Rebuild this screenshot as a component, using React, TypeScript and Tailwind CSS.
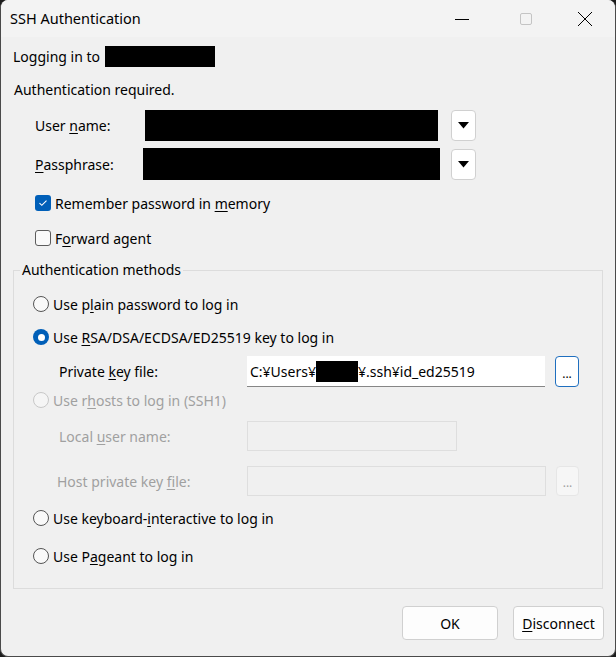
import React from "react";

const font = { fontFamily: '"Noto Sans", "Open Sans", sans-serif' };

function Key({ children }: { children: React.ReactNode }) {
  return <span className="underline underline-offset-2 decoration-1">{children}</span>;
}

function DropButton() {
  return (
    <div className="ml-[13px] flex h-[31px] w-[25px] items-center justify-center rounded-[4px] border border-[#d0d0d0] bg-white">
      <svg width="11" height="7" viewBox="0 0 11 7">
        <path d="M0 0 H11 L5.5 6.5 Z" fill="#000" />
      </svg>
    </div>
  );
}

function Checkbox({ checked }: { checked?: boolean }) {
  return checked ? (
    <div className="flex h-[16px] w-[16px] items-center justify-center rounded-[3px] bg-[#005fb8]">
      <svg width="10" height="8" viewBox="0 0 10 8">
        <path d="M1.5 4.2 L3.8 6.3 L8.5 1.6" fill="none" stroke="#fff" strokeWidth="1.1" />
      </svg>
    </div>
  ) : (
    <div className="h-[16px] w-[16px] rounded-[3px] border border-[#5c5c5c] bg-[#f9f9f9]" />
  );
}

function Radio({ checked, disabled }: { checked?: boolean; disabled?: boolean }) {
  if (checked)
    return (
      <div className="flex h-[16px] w-[16px] items-center justify-center rounded-full bg-[#005fb8]">
        <div className="h-[7px] w-[7px] rounded-full bg-white" />
      </div>
    );
  return (
    <div
      className={
        "h-[16px] w-[16px] rounded-full border " +
        (disabled ? "border-[#c8c8c8] bg-[#f5f5f5]" : "border-[#555] bg-[#f9f9f9]")
      }
    />
  );
}

function RadioRow({
  children,
  checked,
  disabled,
  mt,
}: {
  children: React.ReactNode;
  checked?: boolean;
  disabled?: boolean;
  mt: string;
}) {
  return (
    <div className={"flex h-[20px] items-center pl-[19px] " + mt}>
      <Radio checked={checked} disabled={disabled} />
      <span className={"ml-[4px] " + (disabled ? "text-[#a0a0a0]" : "")}>{children}</span>
    </div>
  );
}

export default function App() {
  return (
    <div className="h-[657px] w-[616px] bg-[#1c1c1c]" style={font}>
      <div className="flex h-full w-full flex-col overflow-hidden rounded-[8px] border-x border-b border-[#4a4a4a] bg-[#f0f0f0] text-[14px] text-black">
        {/* title bar */}
        <div className="flex h-[37px] shrink-0 items-center bg-[#f3f3f3] pl-[9px]">
          <span className="text-[14.5px]">SSH Authentication</span>
          <div className="ml-auto flex items-center">
            <svg width="16" height="16" viewBox="0 0 16 16" className="mr-[49px]">
              <path d="M1 8.5 H15" stroke="#000" strokeWidth="1" />
            </svg>
            <svg width="14" height="14" viewBox="0 0 14 14" className="mr-[44px]">
              <rect x="1.5" y="1.5" width="11" height="11" rx="1.5" fill="none" stroke="#c4c4c4" />
            </svg>
            <svg width="16" height="16" viewBox="0 0 16 16" className="mr-[22px]">
              <path d="M1 1 L15 15 M15 1 L1 15" stroke="#000" strokeWidth="1" />
            </svg>
          </div>
        </div>

        {/* logging in */}
        <div className="mt-[9px] flex h-[21px] items-center pl-[12px]">
          <span>Logging in to</span>
          <div className="ml-[5px] h-[21px] w-[110px] bg-black" />
        </div>
        <div className="mt-[12px] flex h-[20px] items-center pl-[13px]">Authentication required.</div>

        {/* user name */}
        <div className="mt-[10px] flex h-[32px] items-center pl-[34px]">
          <span className="w-[110px]">
            User <Key>n</Key>ame:
          </span>
          <div className="h-[31px] w-[293px] bg-black" />
          <DropButton />
        </div>
        <div className="mt-[7px] flex h-[32px] items-center pl-[34px]">
          <span className="w-[108px]">
            <Key>P</Key>assphrase:
          </span>
          <div className="h-[32px] w-[297px] bg-black" />
          <div className="-ml-[2px]">
            <DropButton />
          </div>
        </div>

        {/* checkboxes */}
        <div className="mt-[13px] flex h-[20px] items-center pl-[34px]">
          <Checkbox checked />
          <span className="ml-[4px]">
            Remember password in <Key>m</Key>emory
          </span>
        </div>
        <div className="mt-[15px] flex h-[20px] items-center pl-[34px]">
          <Checkbox />
          <span className="ml-[4px]">
            F<Key>o</Key>rward agent
          </span>
        </div>

        {/* group */}
        <div className="relative mx-[12px] mt-[22px] h-[319px] border border-[#dcdcdc]">
          <span className="absolute -top-[11px] left-[6px] bg-[#f0f0f0] px-[2px] leading-[20px]">
            Authentication methods
          </span>
          <RadioRow mt="mt-[23px]">
            Use p<Key>l</Key>ain password to log in
          </RadioRow>
          <RadioRow mt="mt-[13px]" checked>
            Use <Key>R</Key>SA/DSA/ECDSA/ED25519 key to log in
          </RadioRow>
          <div className="mt-[9px] flex h-[31px] items-center pl-[45px]">
            <span className="w-[188px]">
              Private <Key>k</Key>ey file:
            </span>
            <div className="flex h-[31px] w-[298px] items-center border-b border-[#868686] bg-white pl-[3px]">
              C:¥Users¥<span className="inline-block h-[21px] w-[42px] bg-black" />¥.ssh¥id_ed25519
            </div>
            <div className="ml-[10px] flex h-[31px] w-[24px] items-center justify-center rounded-[4px] border border-[#1f6fbf] bg-white pt-[4px] text-[12px] leading-none">
              ...
            </div>
          </div>
          <RadioRow mt="mt-[3px]" disabled>
            Use r<Key>h</Key>osts to log in (SSH1)
          </RadioRow>
          <div className="mt-[11px] flex h-[30px] items-center pl-[45px] text-[#a0a0a0]">
            <span className="w-[188px]">
              Local <Key>u</Key>ser name:
            </span>
            <div className="h-[30px] w-[210px] border border-[#dedede] bg-[#f0f0f0]" />
          </div>
          <div className="mt-[15px] flex h-[30px] items-center pl-[43px] text-[#a0a0a0]">
            <span className="w-[190px]">
              Host private key <Key>f</Key>ile:
            </span>
            <div className="h-[30px] w-[299px] border border-[#dedede] bg-[#f0f0f0]" />
            <div className="ml-[10px] flex h-[30px] w-[23px] items-center justify-center rounded-[4px] border border-[#e6e6e6] bg-[#f6f6f6] pt-[4px] text-[12px] leading-none text-[#a0a0a0]">
              ...
            </div>
          </div>
          <RadioRow mt="mt-[12px]">
            Use keyboard-<Key>i</Key>nteractive to log in
          </RadioRow>
          <RadioRow mt="mt-[18px]">
            Use P<Key>a</Key>geant to log in
          </RadioRow>
        </div>

        {/* buttons */}
        <div className="mt-[17px] flex justify-end pr-[11px]">
          <div className="flex h-[34px] w-[96px] items-center justify-center rounded-[4px] border border-[#d0d0d0] bg-[#fdfdfd]">
            OK
          </div>
          <div className="ml-[15px] flex h-[34px] w-[91px] items-center justify-center rounded-[4px] border border-[#d0d0d0] bg-[#fdfdfd]">
            <Key>D</Key>isconnect
          </div>
        </div>
      </div>
    </div>
  );
}
